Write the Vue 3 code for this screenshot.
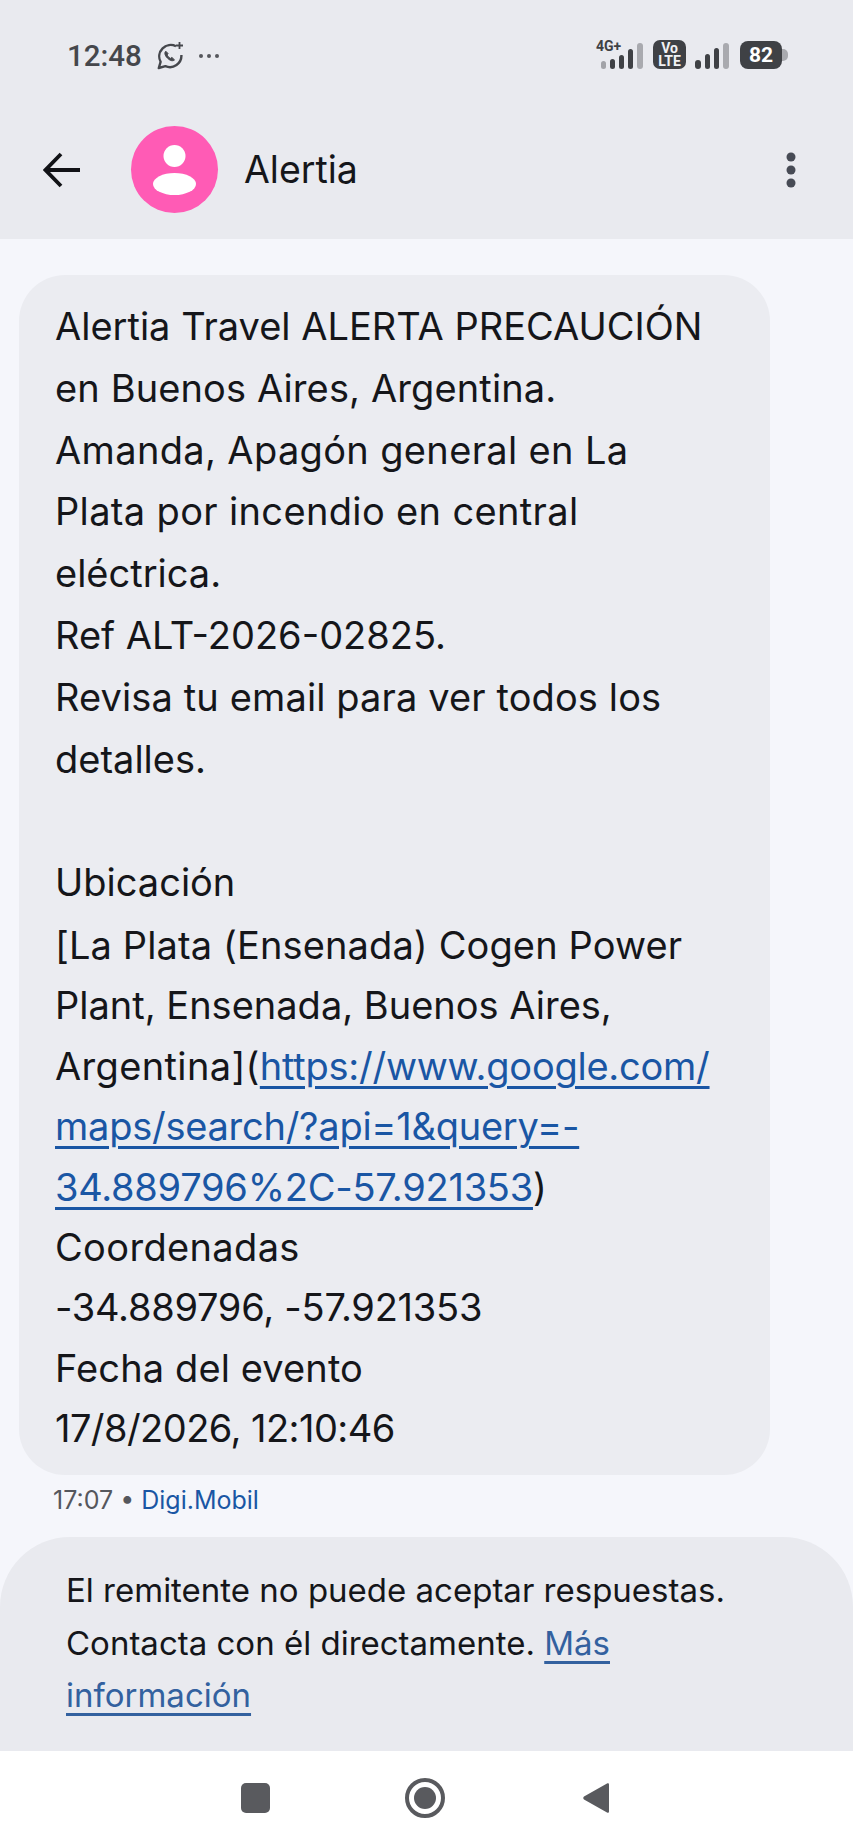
<template>
  <div class="screen">
    <header class="top">
      <div class="status">
        <div class="status-left">
          <span class="time">12:48</span>
          <svg class="wa" width="28" height="28" viewBox="0 0 28 28" fill="none" stroke="#45474c" stroke-width="2.4">
            <path d="M20 4.200A11.500 11.500 0 0 0 4.600 19.800L2.800 26l6.600-1.800A11.500 11.500 0 0 0 25.400 13" stroke-linejoin="round"/>
            <path d="M9.800 9.200c-1.700 1.400-1 4.300 1.700 7 2.700 2.700 5.500 3.200 7 1.700l-2.600-2.500-1.500 1c-1.500-.7-2.700-1.900-3.400-3.400l1-1.500z" fill="#45474c" stroke-width="1"/>
            <path d="M23.500 0v7M20 3.500h7" stroke-width="1.800"/>
          </svg>
          <span class="dots"><i></i><i></i><i></i></span>
        </div>
        <div class="status-right">
          <div class="sim">
            <span class="net">4G+</span>
            <svg width="42" height="26" viewBox="0 0 42 26" fill="#3f4145">
              <rect x="5" y="18" width="5" height="8" rx="2.500" fill="#a2a3a8"/>
              <rect x="14" y="16" width="5" height="10" rx="2.500"/>
              <rect x="23" y="12" width="5" height="14" rx="2.500"/>
              <rect x="32" y="6" width="5" height="20" rx="2.500"/>
            </svg>
          </div>
          <svg class="bar-last" width="6" height="26" viewBox="0 0 6 26"><rect width="6" height="26" rx="3" fill="#a9aaaf"/></svg>
          <div class="volte"><span>Vo</span><span>LTE</span></div>
          <svg width="34" height="26" viewBox="0 0 34 26" fill="#3f4145">
            <rect x="0" y="17" width="6" height="9" rx="3"/>
            <rect x="10" y="11" width="5" height="15" rx="2.500"/>
            <rect x="19" y="5" width="5" height="21" rx="2.500"/>
            <rect x="28" y="0" width="6" height="26" rx="3" fill="#a9aaaf"/>
          </svg>
          <div class="battery"><span>82</span></div>
        </div>
      </div>
      <div class="toolbar">
        <svg class="back" width="38" height="36" viewBox="0 0 38 36" fill="none" stroke="#111216" stroke-width="3.800">
          <path d="M37 18H3M18 2 2.500 18 18 34"/>
        </svg>
        <div class="avatar">
          <svg width="87" height="87" viewBox="0 0 87 87" fill="#fff">
            <circle cx="43.500" cy="30" r="11"/>
            <ellipse cx="43.500" cy="58" rx="21.500" ry="11"/>
          </svg>
        </div>
        <h1 class="title">Alertia</h1>
        <svg class="more" width="10" height="36" viewBox="0 0 10 36" fill="#474b55">
          <circle cx="5" cy="5" r="4.500"/><circle cx="5" cy="18" r="4.500"/><circle cx="5" cy="31" r="4.500"/>
        </svg>
      </div>
    </header>

    <main class="thread">
      <div class="bubble">
        <p class="intro">
          Alertia Travel ALERTA PRECAUCIÓN<br>
          <span class="loose">en Buenos Aires, Argentina.</span><br>
          <span class="wide">Amanda, Apagón general en La</span><br>
          <span class="wide">Plata por incendio en central</span><br>
          eléctrica.<br>
          Ref ALT-2026-02825.<br>
          <span class="loose">Revisa tu email para ver todos los</span><br>
          detalles.<br>
          <br>
          Ubicación
        </p>
        <p class="details">
          <span class="loose">[La Plata (Ensenada) Cogen Power</span><br>
          Plant, Ensenada, Buenos Aires,<br>
          <span class="wide">Argentina](</span><a class="link tight">https://www.google.com/<br>maps/search/?api=1&amp;query=-<br>34.889796%2C-57.921353</a>)<br>
          <span class="wide">Coordenadas</span><br>
          <span class="tight">-34.889796, -57.921353</span><br>
          <span class="loose">Fecha del evento</span><br>
          <span class="tighter">17/8/2026, 12:10:46</span>
        </p>
      </div>
      <div class="meta">17:07 • <span class="sim-name">Digi.Mobil</span></div>
    </main>

    <section class="notice">
      El remitente no puede aceptar respuestas.<br>
      Contacta con él directamente. <a class="notice-link">Más<br>información</a>
    </section>

    <nav class="nav">
      <span class="nav-square"></span>
      <span class="nav-home"><i></i></span>
      <svg class="nav-back" width="26" height="32" viewBox="0 0 26 32"><path d="M24 1.500c1-.6 2-.2 2 1v27c0 1.200-1 1.700-2 1L1 17.500c-1-.8-1-2.200 0-3z" fill="#595a5e"/></svg>
    </nav>
  </div>
</template>

<script setup>
</script>

<style>
body {
  margin: 0;
  background: #f5f6fb;
}
</style>

<style scoped>
.screen {
  width: 853px;
  height: 1844px;
  display: flex;
  flex-direction: column;
  font-family: Inter, "Liberation Sans", sans-serif;
  color: #15161a;
  background: #f5f6fb;
  overflow: hidden;
}

.top {
  height: 239px;
  flex: none;
  background: #e9eaef;
}

.status {
  height: 100px;
  box-sizing: border-box;
  padding: 40px 71px 0 67px;
  display: flex;
  justify-content: space-between;
  align-items: flex-start;
}

.status-left {
  display: flex;
  align-items: center;
  height: 32px;
}

.time {
  font-family: Roboto, sans-serif;
  font-size: 29.500px;
  font-weight: 500;
  color: #45474c;
}

.wa {
  margin-left: 14px;
}

.dots {
  display: flex;
  gap: 4px;
  margin-left: 15px;
}

.dots i {
  width: 4px;
  height: 4px;
  border-radius: 50%;
  background: #55575c;
}

.status-right {
  display: flex;
  align-items: flex-end;
  height: 29px;
  color: #3f4145;
}

.sim {
  position: relative;
  width: 42px;
  height: 26px;
}

.net {
  position: absolute;
  left: 0;
  top: -5px;
  font-family: Roboto, sans-serif;
  font-size: 14px;
  font-weight: 700;
}

.bar-last {
  margin-left: -1px;
}

.volte {
  width: 33px;
  height: 29px;
  margin: 0 9px 0 10px;
  border-radius: 7px;
  background: #3f4145;
  color: #f1f1f4;
  display: flex;
  flex-direction: column;
  align-items: center;
  justify-content: center;
  font-family: Roboto, sans-serif;
  font-size: 14px;
  font-weight: 700;
  line-height: 12.500px;
}

.battery {
  width: 42px;
  height: 28px;
  margin-left: 11px;
  border-radius: 8px;
  background: #3f4145;
  color: #fff;
  font-family: Roboto, sans-serif;
  font-size: 21px;
  font-weight: 700;
  line-height: 28px;
  text-align: center;
  position: relative;
}

.battery::after {
  content: "";
  position: absolute;
  left: 42px;
  top: 8px;
  width: 6px;
  height: 12px;
  border-radius: 0 5px 5px 0;
  background: #a9aaaf;
}

.toolbar {
  height: 139px;
  box-sizing: border-box;
  padding: 0 57px 0 43px;
  display: flex;
  align-items: center;
}

.avatar {
  width: 87px;
  height: 87px;
  margin-left: 50px;
  border-radius: 50%;
  background: #ff5bb5;
}

.avatar svg {
  display: block;
}

.title {
  margin: 0 0 0 26px;
  flex: 1;
  font-size: 37.500px;
  font-weight: 400;
}

.thread {
  flex: 1;
  padding: 36px 0 0 19px;
}

.bubble {
  width: 751px;
  height: 1200px;
  box-sizing: border-box;
  padding: 21px 0 0 36px;
  border-radius: 46px;
  background: #ebecf1;
  font-size: 38px;
  white-space: nowrap;
}

.intro {
  margin: 0;
  line-height: 61.800px;
}

.details {
  margin: 1px 0 0;
  line-height: 60.400px;
}

.loose {
  letter-spacing: 0.12px;
}

.wide {
  letter-spacing: 0.35px;
}

.tight {
  letter-spacing: -0.25px;
}

.tighter {
  letter-spacing: -0.55px;
}

.link {
  color: #1a56a4;
  text-decoration: underline;
  text-decoration-thickness: 3px;
  text-underline-offset: 6px;
}

.meta {
  margin: 10px 0 0 34px;
  font-size: 25px;
  color: #55575d;
}

.sim-name {
  color: #1a56a4;
}

.notice {
  height: 214px;
  flex: none;
  box-sizing: border-box;
  padding: 27px 0 0 66px;
  border-radius: 70px 70px 0 0;
  background: #e9eaef;
  font-size: 33px;
  line-height: 52.500px;
  white-space: nowrap;
}

.notice-link {
  color: #33619f;
  text-decoration: underline;
  text-underline-offset: 6px;
}

.nav {
  height: 93px;
  flex: none;
  box-sizing: border-box;
  padding-right: 3px;
  background: #fff;
  display: flex;
  align-items: center;
  justify-content: center;
  gap: 135px;
}

.nav-back {
  margin-left: 3px;
}

.nav-square {
  width: 29px;
  height: 30px;
  border-radius: 5px;
  background: #595a5e;
}

.nav-home {
  width: 40px;
  height: 40px;
  box-sizing: border-box;
  border: 4px solid #595a5e;
  border-radius: 50%;
  display: flex;
  align-items: center;
  justify-content: center;
}

.nav-home i {
  width: 22px;
  height: 22px;
  border-radius: 50%;
  background: #595a5e;
}
</style>
